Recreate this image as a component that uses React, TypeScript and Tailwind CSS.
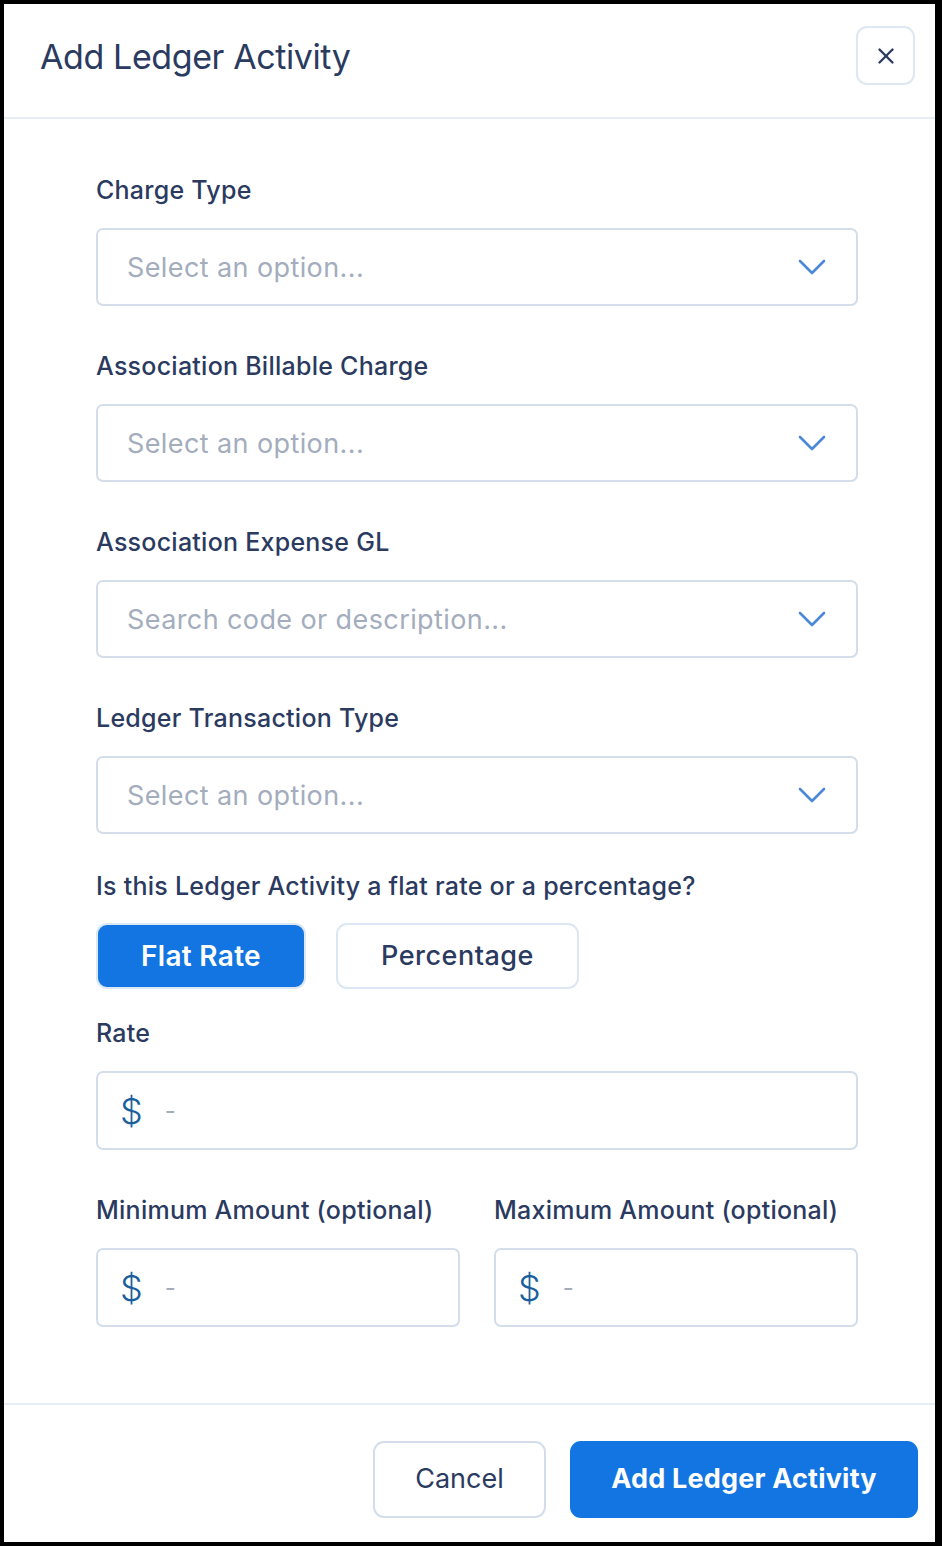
import { X } from 'lucide-react'

const FONT = { fontFamily: 'Inter, "Noto Sans", sans-serif' }

function Label({ children }: { children: React.ReactNode }) {
  return <p className="text-[25px] leading-[30px] font-medium tracking-[0.25px] text-[#2b3a5f]">{children}</p>
}

function Chevron() {
  return (
    <svg width="28" height="16" viewBox="0 0 28 16" fill="none" className="text-[#4b88d8]">
      <polyline points="2,2 14,14 26,2" stroke="currentColor" strokeWidth="2.6" strokeLinecap="round" strokeLinejoin="round" />
    </svg>
  )
}

function SelectField({ label, placeholder }: { label: string; placeholder: string }) {
  return (
    <div className="flex flex-col gap-[23px]">
      <Label>{label}</Label>
      <div className="h-[78px] rounded-[7px] border-2 border-[#d3deea] flex items-center justify-between pl-[29px] pr-[30px]">
        <span className="text-[27px] tracking-[0.4px] text-[#a3adbd] pt-[3px]">{placeholder}</span>
        <Chevron />
      </div>
    </div>
  )
}

function MoneyInput() {
  return (
    <div className="h-[79px] rounded-[7px] border-2 border-[#d3deea] flex items-center gap-[22px] pl-[22px]">
      <span className="text-[36px] leading-none text-[#1a5f9c] font-light">$</span>
      <span className="text-[24px] text-[#a3adbd]">-</span>
    </div>
  )
}

export default function App() {
  return (
    <div className="w-[942px] h-[1546px] bg-black pl-[4px] pt-[4px] pr-[7px] pb-[4px]" style={FONT}>
      <div className="w-full h-full bg-white flex flex-col">
        {/* Header */}
        <div className="h-[115px] border-b-2 border-[#e6edf4] flex items-center justify-between pl-[36px] pr-[20px] pb-[8px] shrink-0">
          <h1 className="text-[34px] text-[#2b3a5f] tracking-[-0.4px]">Add Ledger Activity</h1>
          <button className="w-[59px] h-[59px] rounded-[11px] border-2 border-[#dde8f2] flex items-center justify-center -mt-[2px]">
            <X className="w-[26px] h-[26px] text-[#2b3a5f]" strokeWidth={2.2} />
          </button>
        </div>

        {/* Body */}
        <div className="flex-1 pl-[92px] pr-[77px] pt-[56px] flex flex-col">
          <div className="flex flex-col gap-[45px]">
            <SelectField label="Charge Type" placeholder="Select an option..." />
            <SelectField label="Association Billable Charge" placeholder="Select an option..." />
            <SelectField label="Association Expense GL" placeholder="Search code or description..." />
            <SelectField label="Ledger Transaction Type" placeholder="Select an option..." />
          </div>

          <div className="mt-[37px]">
            <Label>Is this Ledger Activity a flat rate or a percentage?</Label>
          </div>
          <div className="flex gap-[30px] mt-[22px]">
            <button className="w-[210px] h-[66px] rounded-[11px] bg-[#1275e1] border-2 border-[#dbe7f3] text-white text-[28px] font-semibold tracking-[0.3px]">
              Flat Rate
            </button>
            <button className="w-[243px] h-[66px] rounded-[11px] bg-white border-2 border-[#dbe7f3] text-[#2b3a5f] text-[27px] font-medium tracking-[0.5px]">
              Percentage
            </button>
          </div>

          <div className="mt-[29px] flex flex-col gap-[23px]">
            <Label>Rate</Label>
            <MoneyInput />
          </div>

          <div className="mt-[45px] grid grid-cols-2 gap-[34px]">
            <div className="flex flex-col gap-[23px]">
              <Label>Minimum Amount (optional)</Label>
              <MoneyInput />
            </div>
            <div className="flex flex-col gap-[23px]">
              <Label>Maximum Amount (optional)</Label>
              <MoneyInput />
            </div>
          </div>
        </div>

        {/* Footer */}
        <div className="h-[139px] border-t-2 border-[#e6edf4] flex items-start justify-end gap-[24px] pr-[17px] pt-[36px] shrink-0">
          <button className="w-[173px] h-[77px] rounded-[11px] border-2 border-[#d3deea] bg-white text-[27px] text-[#2b3a5f]">
            Cancel
          </button>
          <button className="w-[348px] h-[77px] rounded-[11px] bg-[#1275e1] text-white text-[27px] font-bold tracking-[0.2px]">
            Add Ledger Activity
          </button>
        </div>
      </div>
    </div>
  )
}
